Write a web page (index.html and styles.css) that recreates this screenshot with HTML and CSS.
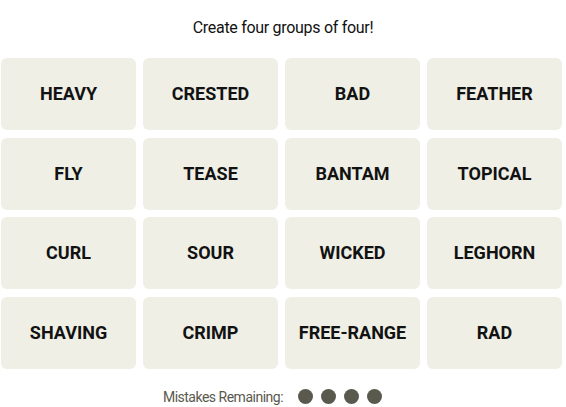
FILE: index.html
```html
<!DOCTYPE html>
<html>
<head>
<meta charset="utf-8">
<link rel="stylesheet" href="styles.css">
</head>
<body>
<div class="game">
  <p class="prompt">Create four groups of four!</p>
  <div class="board">
    <div class="tile"><span class="word">HEAVY</span></div>
    <div class="tile"><span class="word">CRESTED</span></div>
    <div class="tile"><span class="word">BAD</span></div>
    <div class="tile"><span class="word">FEATHER</span></div>
    <div class="tile"><span class="word">FLY</span></div>
    <div class="tile"><span class="word">TEASE</span></div>
    <div class="tile"><span class="word">BANTAM</span></div>
    <div class="tile"><span class="word">TOPICAL</span></div>
    <div class="tile"><span class="word">CURL</span></div>
    <div class="tile"><span class="word">SOUR</span></div>
    <div class="tile"><span class="word">WICKED</span></div>
    <div class="tile"><span class="word">LEGHORN</span></div>
    <div class="tile"><span class="word">SHAVING</span></div>
    <div class="tile"><span class="word">CRIMP</span></div>
    <div class="tile"><span class="word">FREE-RANGE</span></div>
    <div class="tile"><span class="word">RAD</span></div>
  </div>
  <div class="mistakes">
    <span class="mistakes-label">Mistakes Remaining:</span>
    <span class="dots">
      <span class="dot"></span><span class="dot"></span><span class="dot"></span><span class="dot"></span>
    </span>
  </div>
</div>
</body>
</html>
```
FILE: styles.css
```css
html, body {
  margin: 0;
  padding: 0;
  background: #ffffff;
}
body {
  font-family: Roboto, "Liberation Sans", sans-serif;
  color: #121212;
}
.game {
  width: 566px;
  padding-top: 18px;
}
.prompt {
  margin: 0;
  text-align: center;
  font-size: 16px;
  line-height: 20px;
  letter-spacing: -0.3px;
  color: #121212;
}
.board {
  margin: 20px 0 0 1px;
  width: 561px;
  display: grid;
  grid-template-columns: repeat(4, 135px);
  grid-auto-rows: 72px;
  column-gap: 7px;
  row-gap: 7.5px;
}
.tile {
  background: #efefe6;
  border-radius: 6px;
  display: flex;
  align-items: center;
  justify-content: center;
}
.word {
  display: inline-block;
  font-weight: 700;
  font-size: 18px;
  line-height: 20px;
  color: #121212;
}
.mistakes {
  margin-top: 18px;
  height: 20px;
  display: flex;
  justify-content: center;
  align-items: center;
  gap: 15px;
  padding-right: 21px;
}
.mistakes-label {
  font-size: 14px;
  letter-spacing: -0.5px;
  color: #5a594e;
}
.dots {
  display: flex;
  gap: 8px;
}
.dot {
  width: 15px;
  height: 15px;
  border-radius: 50%;
  background: #5a594e;
}
```
